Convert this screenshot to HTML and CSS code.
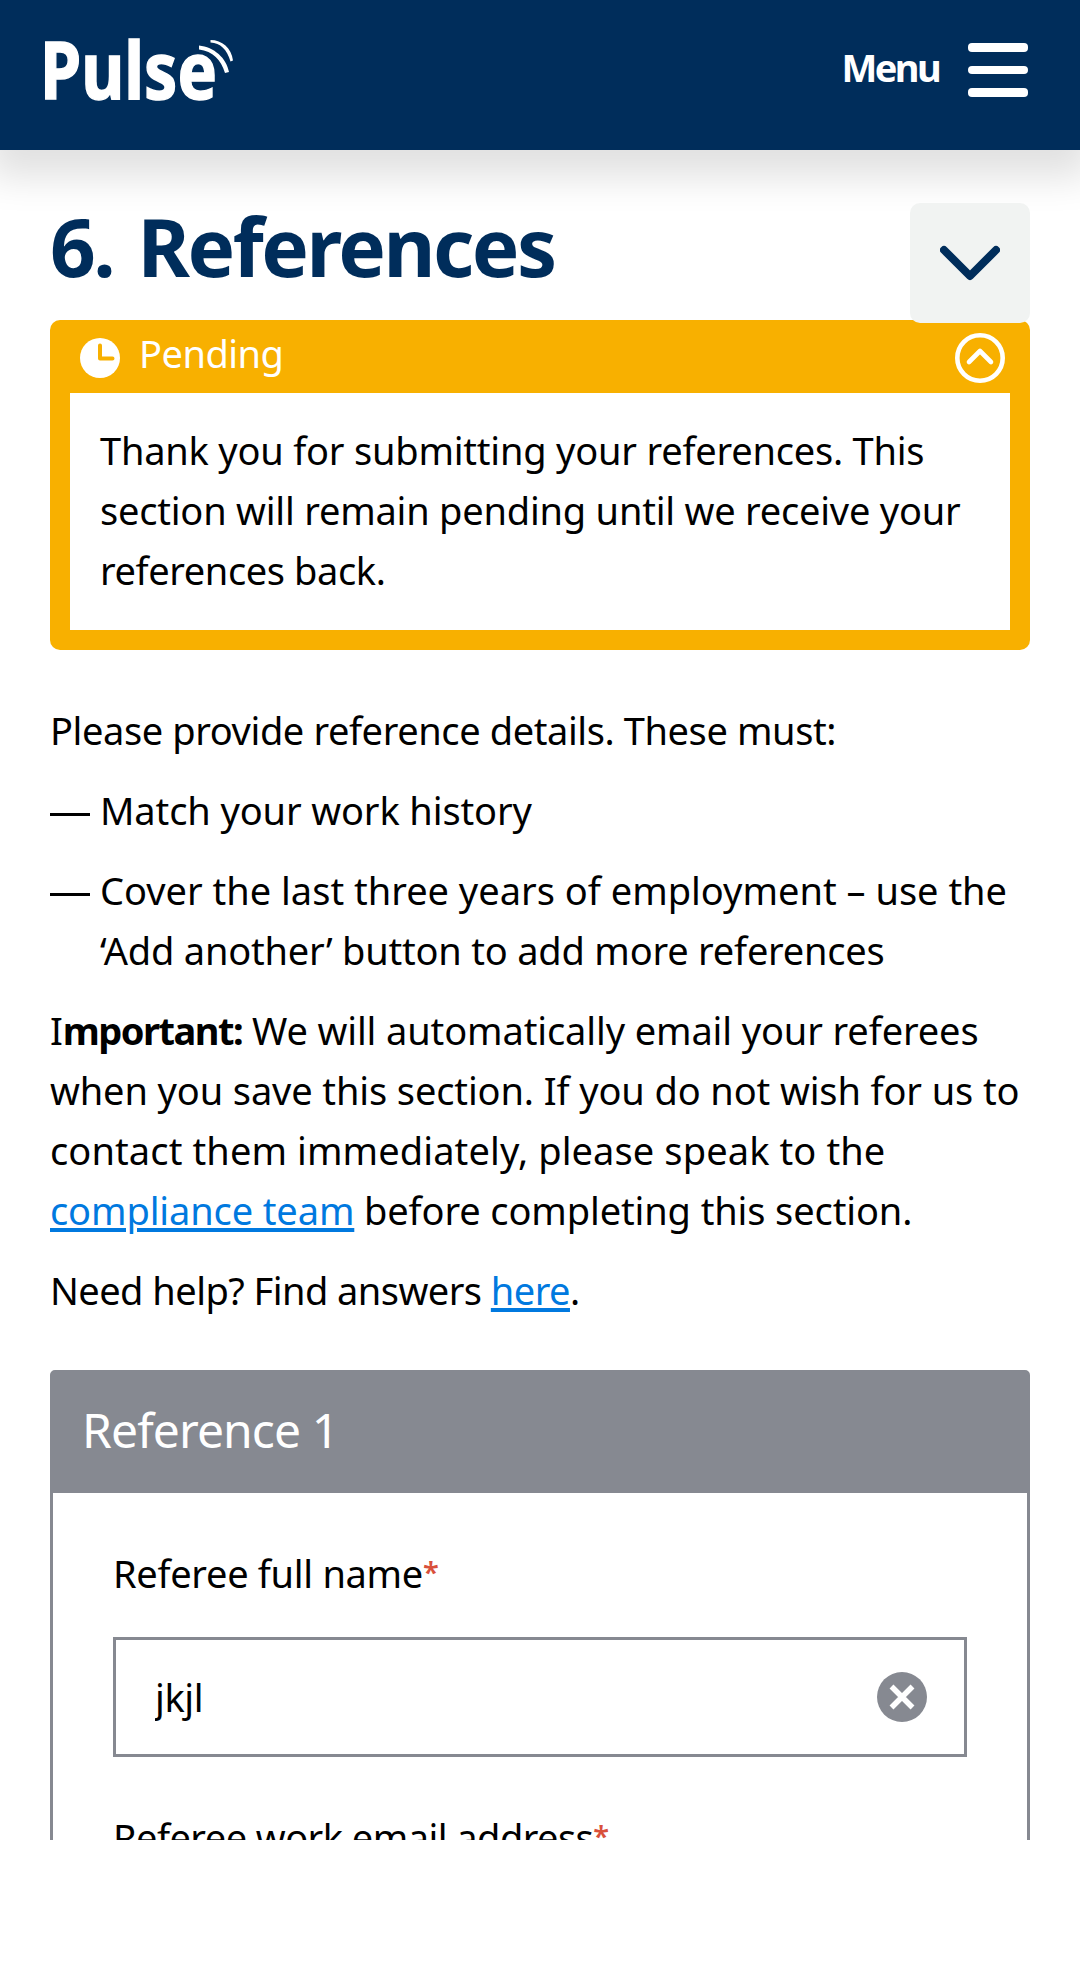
FILE: index.html
```html
<!DOCTYPE html>
<html lang="en">
<head>
<meta charset="utf-8">
<title>Pulse – References</title>
<link rel="stylesheet" href="styles.css">
</head>
<body>
<div class="screen">
  <header class="topbar">
    <svg class="logo" width="200" height="140" viewBox="40 0 200 140" role="img" aria-label="Pulse">
      <text class="logo-text" x="40" y="98.5" textLength="177" lengthAdjust="spacingAndGlyphs">Pulse</text>
      <path d="M199 45.500C214 47 226.500 58 229 72L225 73C221 60 213 51 199 49.500Z"/>
      <path d="M210.500 40C222 40 231.500 48 233 60.500L230.500 61.500C227 49.500 220.500 43 210.500 42.500Z"/>
    </svg>
    <button class="menu" type="button">
      <span class="menu-label">Menu</span>
      <svg class="burger" width="60" height="54" viewBox="0 0 60 54">
        <rect y="0" width="60" height="9" rx="4"/><rect y="23" width="60" height="8" rx="4"/><rect y="45" width="60" height="9" rx="4"/>
      </svg>
    </button>
  </header>

  <main class="content">
    <div class="title-row">
      <h1 class="title">6. References</h1>
      <button class="toggle" type="button" aria-label="Toggle section">
        <svg width="60" height="36" viewBox="0 0 60 36"><path d="M4 5L30 31L56 5"/></svg>
      </button>
    </div>

    <section class="notice">
      <div class="notice-head">
        <svg class="clock" width="40" height="40" viewBox="0 0 40 40"><circle cx="20" cy="20" r="20"/><path d="M20 7.500V20.500H32.500"/></svg>
        <span class="notice-title">Pending</span>
        <svg class="collapse" width="50" height="50" viewBox="0 0 50 50"><circle cx="25" cy="25" r="22.700"/><path d="M14 29L25 18L36 29"/></svg>
      </div>
      <p class="notice-body">
        <span class="line snug">Thank you for submitting your references. This</span>
        <span class="line snug">section will remain pending until we receive your</span>
        <span class="line tight">references back.</span>
      </p>
    </section>

    <div class="copy">
      <p class="tight">Please provide reference details. These must:</p>
      <ul class="rules">
        <li><span class="line near">Match your work history</span></li>
        <li><span class="line">Cover the last three years of employment – use the</span><span class="line snug">‘Add another’ button to add more references</span></li>
      </ul>
      <p>
        <span class="line near">I<strong>mportant:</strong> We will automatically email your referees</span>
        <span class="line near">when you save this section. If you do not wish for us to</span>
        <span class="line wide">contact them immediately, please speak to the</span>
        <span class="line near"><a href="#">compliance team</a> before completing this section.</span>
      </p>
      <p class="help">Need help? Find answers <a href="#">here</a>.</p>
    </div>

    <section class="card">
      <h2 class="card-head">Reference 1</h2>
      <div class="card-body">
        <label class="label" for="name">Referee full name<span class="req">*</span></label>
        <div class="field">
          <input id="name" class="input" type="text" value="jkjl">
          <svg class="clear" width="50" height="50" viewBox="0 0 50 50"><circle cx="25" cy="25" r="25"/><path d="M14.500 14.500L35.500 35.500M35.500 14.500L14.500 35.500"/></svg>
        </div>
        <label class="label label-email">Referee work email address<span class="req">*</span></label>
      </div>
    </section>
  </main>
</div>
</body>
</html>
```
FILE: styles.css
```css
* { box-sizing: border-box; }
body {
  margin: 0;
  background: #fff;
  color: #000;
  font: 38px/60px "Noto Sans", "Open Sans", sans-serif;
}
h1, h2, p, ul { margin: 0; padding: 0; }
svg { display: block; flex: none; }
button { border: 0; padding: 0; font: inherit; }
.screen { height: 1840px; overflow: hidden; }

.topbar {
  height: 150px;
  padding: 0 52px 0 40px;
  display: flex;
  justify-content: space-between;
  align-items: flex-start;
  background: #002d5b;
  box-shadow: 0 16px 36px 11px rgba(0, 0, 0, .12);
}
.logo { fill: #fff; }
.logo-text { font-size: 78px; font-weight: 700; stroke: #fff; stroke-width: 1.500; }
.menu { display: flex; align-items: flex-start; background: none; color: #fff; padding-top: 40px; }
.menu-label { font-weight: 700; letter-spacing: -2.600px; line-height: 54px; margin-right: 29px; }
.burger { fill: #fff; margin-top: 3px; }

.content { padding: 53px 50px 0; }
.title-row { display: flex; justify-content: space-between; height: 117px; }
.title { font-size: 80px; line-height: 86px; font-weight: 700; letter-spacing: -2.500px; word-spacing: 6px; color: #002d5b; }
.toggle {
  position: relative;
  z-index: 1;
  width: 120px;
  height: 120px;
  border-radius: 10px;
  background: #f1f3f2;
  display: grid;
  place-items: center;
}
.toggle path { fill: none; stroke: #002d5b; stroke-width: 8; stroke-linecap: round; stroke-linejoin: round; }

.notice { background: #f8b000; border-radius: 10px; padding: 0 20px 20px; }
.notice-head { height: 73px; display: flex; align-items: center; padding: 2px 5px 0 10px; color: #fff; }
.clock { fill: #fff; margin-right: 19px; }
.clock path { fill: none; stroke: #f8b000; stroke-width: 4; stroke-linecap: round; stroke-linejoin: round; }
.notice-title { flex: 1; letter-spacing: -.500px; margin-top: -9px; }
.collapse { fill: none; stroke: #fff; stroke-width: 4.600; stroke-linecap: round; stroke-linejoin: round; }
.notice-body { background: #fff; padding: 27px 0 30px 30px; }

.line { display: block; white-space: nowrap; }
.snug { letter-spacing: -.210px; }
.tight { letter-spacing: -.400px; }
.near { letter-spacing: -.120px; }
.wide { letter-spacing: .110px; }

.copy { padding-top: 50px; display: flex; flex-direction: column; gap: 20px; }
.rules { list-style: none; display: flex; flex-direction: column; gap: 20px; }
.rules li { display: grid; grid-template-columns: 50px 1fr; }
.rules li::before { content: ""; width: 40px; height: 3px; background: #000; margin-top: 33px; }
.rules li .line { grid-column: 2; }
strong { letter-spacing: -1.500px; }
.help { letter-spacing: -.540px; }
a { color: #0079df; text-decoration: underline; text-decoration-thickness: 4px; text-underline-offset: 3px; }

.card { margin-top: 50px; border: 3px solid #868991; border-radius: 5px; height: 600px; }
.card-head {
  height: 120px;
  padding: 27px 0 0 29px;
  background: #868991;
  color: #fff;
  font-size: 48px;
  font-weight: 400;
  letter-spacing: -.900px;
}
.card-body { padding: 50px 60px 0; }
.label { display: block; letter-spacing: -.300px; }
.req { color: #d9503b; font-size: 29px; font-weight: 600; line-height: 1; position: relative; top: -5px; }
.field {
  height: 120px;
  margin-top: 34px;
  padding: 0 37px 0 39px;
  border: 3px solid #868991;
  display: flex;
  align-items: center;
}
.input { flex: 1; min-width: 0; border: 0; padding: 0; outline: 0; font: inherit; line-height: 60px; letter-spacing: -.400px; color: #000; background: none; }
.clear { fill: #868991; }
.clear path { stroke: #fff; stroke-width: 5.500; }
.label-email { margin-top: 50px; letter-spacing: -.550px; }
```
